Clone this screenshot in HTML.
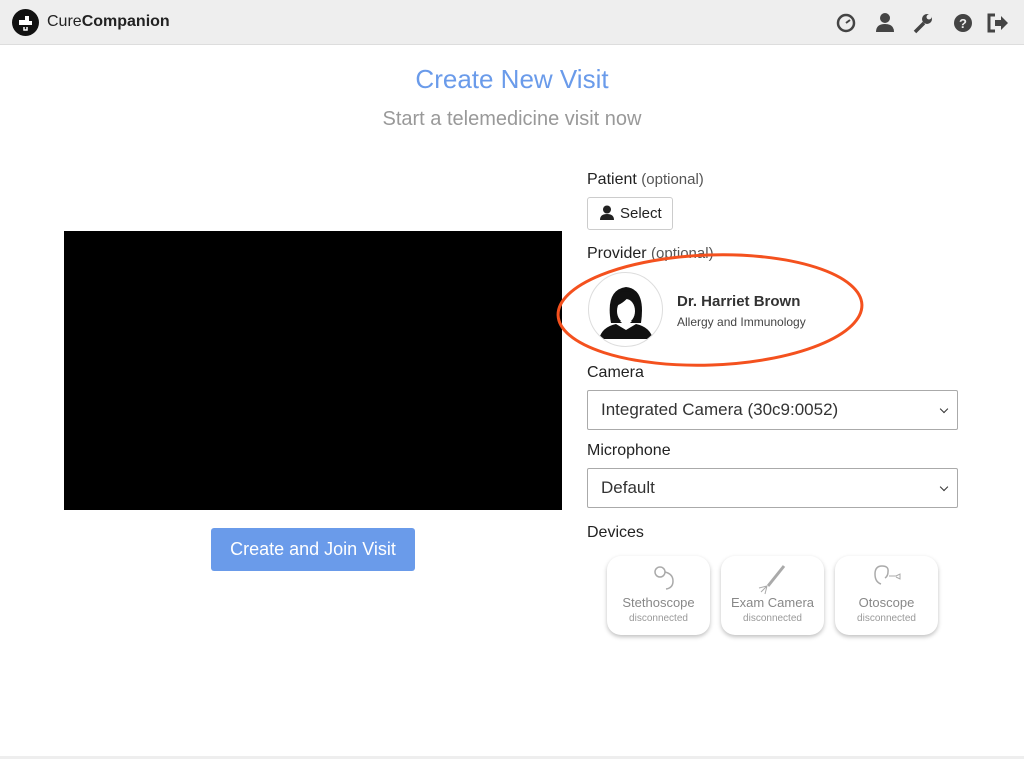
<!DOCTYPE html>
<html><head><style>
body{margin:0;width:1024px;height:759px;background:#fff;font-family:"Liberation Sans",sans-serif;position:relative;overflow:hidden}
.top{position:absolute;left:0;top:0;width:1024px;height:44px;background:#eeeeee;border-bottom:1px solid #ddd}
.abs{position:absolute}
.lbl{font-size:16px;color:#222}
.sel{position:absolute;left:587px;width:371px;height:40px;border:1px solid #aaa;border-radius:2px;font-size:17px;color:#333;box-sizing:border-box;padding:9px 13px}
.sel:after{content:"";position:absolute;right:10px;top:15px;width:5px;height:5px;border-right:1.5px solid #333;border-bottom:1.5px solid #333;transform:rotate(45deg)}
.dev{position:absolute;top:556px;width:103px;height:79px;border-radius:14px;box-shadow:0 2px 4px rgba(0,0,0,.25);background:#fff;text-align:center;color:#888}
.dev .n{position:absolute;top:39px;width:100%;font-size:13px}
.dev .d{position:absolute;top:57px;width:100%;font-size:10px;color:#999}
</style></head><body>
<div class="top"></div>
<svg class="abs" style="left:12px;top:9px" width="27" height="27"><circle cx="13.5" cy="13.5" r="13.5" fill="#111"/><path d="M7 11h6V7h4v5h3v4H7z" fill="#fff"/><path d="M12 18v3h3v-3" fill="none" stroke="#fff" stroke-width="1.5"/></svg>
<div class="abs" style="left:47px;top:13px;font-size:16px;color:#222">Cure<b>Companion</b></div>
<svg class="abs" style="left:835px;top:12px" width="180" height="22" fill="#444">
<circle cx="11" cy="11" r="8" fill="none" stroke="#444" stroke-width="2.5"/><path d="M11 11l4-3" stroke="#444" stroke-width="2"/>
<circle cx="50" cy="6" r="5"/><path d="M41 20q0-8 9-8t9 8z"/>
<path d="M80 20l9-9" stroke="#444" stroke-width="3.5"/><circle cx="92" cy="7" r="5"/><circle cx="94" cy="5" r="2.5" fill="#eee"/>
<circle cx="128" cy="11" r="9"/><text x="124" y="16" font-size="13" font-weight="bold" fill="#eee" font-family="Liberation Sans">?</text>
<path d="M160 3h-6v16h6" fill="none" stroke="#444" stroke-width="3"/><path d="M160 8h6V4l7 7-7 7v-4h-6z"/>
</svg>
<div class="abs" style="left:0;width:1024px;top:64px;text-align:center;font-size:26px;color:#6a9bea">Create New Visit</div>
<div class="abs" style="left:0;width:1024px;top:108px;text-align:center;font-size:20px;color:#999">Start a telemedicine visit now</div>
<div class="abs" style="left:64px;top:231px;width:498px;height:279px;background:#000"></div>
<div class="abs" style="left:211px;top:528px;width:204px;height:43px;background:#6a9bea;border-radius:3px;color:#fff;font-size:18px;text-align:center;line-height:43px">Create and Join Visit</div>
<div class="abs lbl" style="left:587px;top:171px">Patient <span style="font-size:15px;color:#555">(optional)</span></div>
<div class="abs" style="left:587px;top:197px;width:86px;height:33px;border:1px solid #ccc;border-radius:3px;box-sizing:border-box;font-size:15px;color:#222;padding:7px 0 0 32px">Select
<svg class="abs" style="left:11px;top:7px" width="16" height="16" fill="#222"><circle cx="8" cy="4.5" r="4"/><path d="M1 15q0-6 7-6t7 6z"/></svg></div>
<div class="abs lbl" style="left:587px;top:245px">Provider <span style="font-size:15px;color:#555">(optional)</span></div>
<div class="abs" style="left:588px;top:272px;width:75px;height:75px;border-radius:50%;border:1px solid #ddd;box-sizing:border-box;overflow:hidden">
<svg width="75" height="75"><path d="M22 50q-6-33 15-36q20 2 15 36z" fill="#111"/><path d="M10 66q3-12 17-15l10 6 10-6q14 3 17 15z" fill="#111"/><ellipse cx="37" cy="38" rx="9" ry="12" fill="#fff"/><path d="M27 33q10-4 14-12q3 6 8 9q-1-12-12-12t-10 15z" fill="#111"/><path d="M31 48l6 6 6-6" fill="#fff"/></svg></div>
<div class="abs" style="left:677px;top:293px;font-size:15px;font-weight:bold;color:#333">Dr. Harriet Brown</div>
<div class="abs" style="left:677px;top:315px;font-size:12px;color:#444">Allergy and Immunology</div>
<svg class="abs" style="left:555px;top:252px" width="315" height="118"><ellipse cx="155" cy="58" rx="152" ry="55" fill="none" stroke="#f4511e" stroke-width="3" transform="rotate(-2 155 58)"/></svg>
<div class="abs lbl" style="left:587px;top:364px">Camera</div>
<div class="sel" style="top:390px">Integrated Camera (30c9:0052)</div>
<div class="abs lbl" style="left:587px;top:442px">Microphone</div>
<div class="sel" style="top:468px">Default</div>
<div class="abs lbl" style="left:587px;top:524px">Devices</div>
<div class="dev" style="left:607px"><svg width="103" height="40"><circle cx="53" cy="16" r="5" fill="none" stroke="#aaa" stroke-width="1.5"/><path d="M58 16q8 2 8 9t-7 8" fill="none" stroke="#aaa" stroke-width="1.5"/></svg><div class="n">Stethoscope</div><div class="d">disconnected</div></div>
<div class="dev" style="left:721px"><svg width="103" height="40"><path d="M47 30l16-20" stroke="#aaa" stroke-width="3"/><path d="M46 30l-8 2M46 30l-6 6M46 30l-2 8" stroke="#aaa"/></svg><div class="n">Exam Camera</div><div class="d">disconnected</div></div>
<div class="dev" style="left:835px"><svg width="103" height="40"><path d="M46 28q-6-2-6-10t7-8t6 6q0 4-3 6" fill="none" stroke="#aaa" stroke-width="1.5"/><path d="M54 20h7l4-2v5l-4-2" fill="none" stroke="#aaa"/></svg><div class="n">Otoscope</div><div class="d">disconnected</div></div>
<div class="abs" style="left:0;top:756px;width:1024px;height:3px;background:#eee"></div>
</body></html>
